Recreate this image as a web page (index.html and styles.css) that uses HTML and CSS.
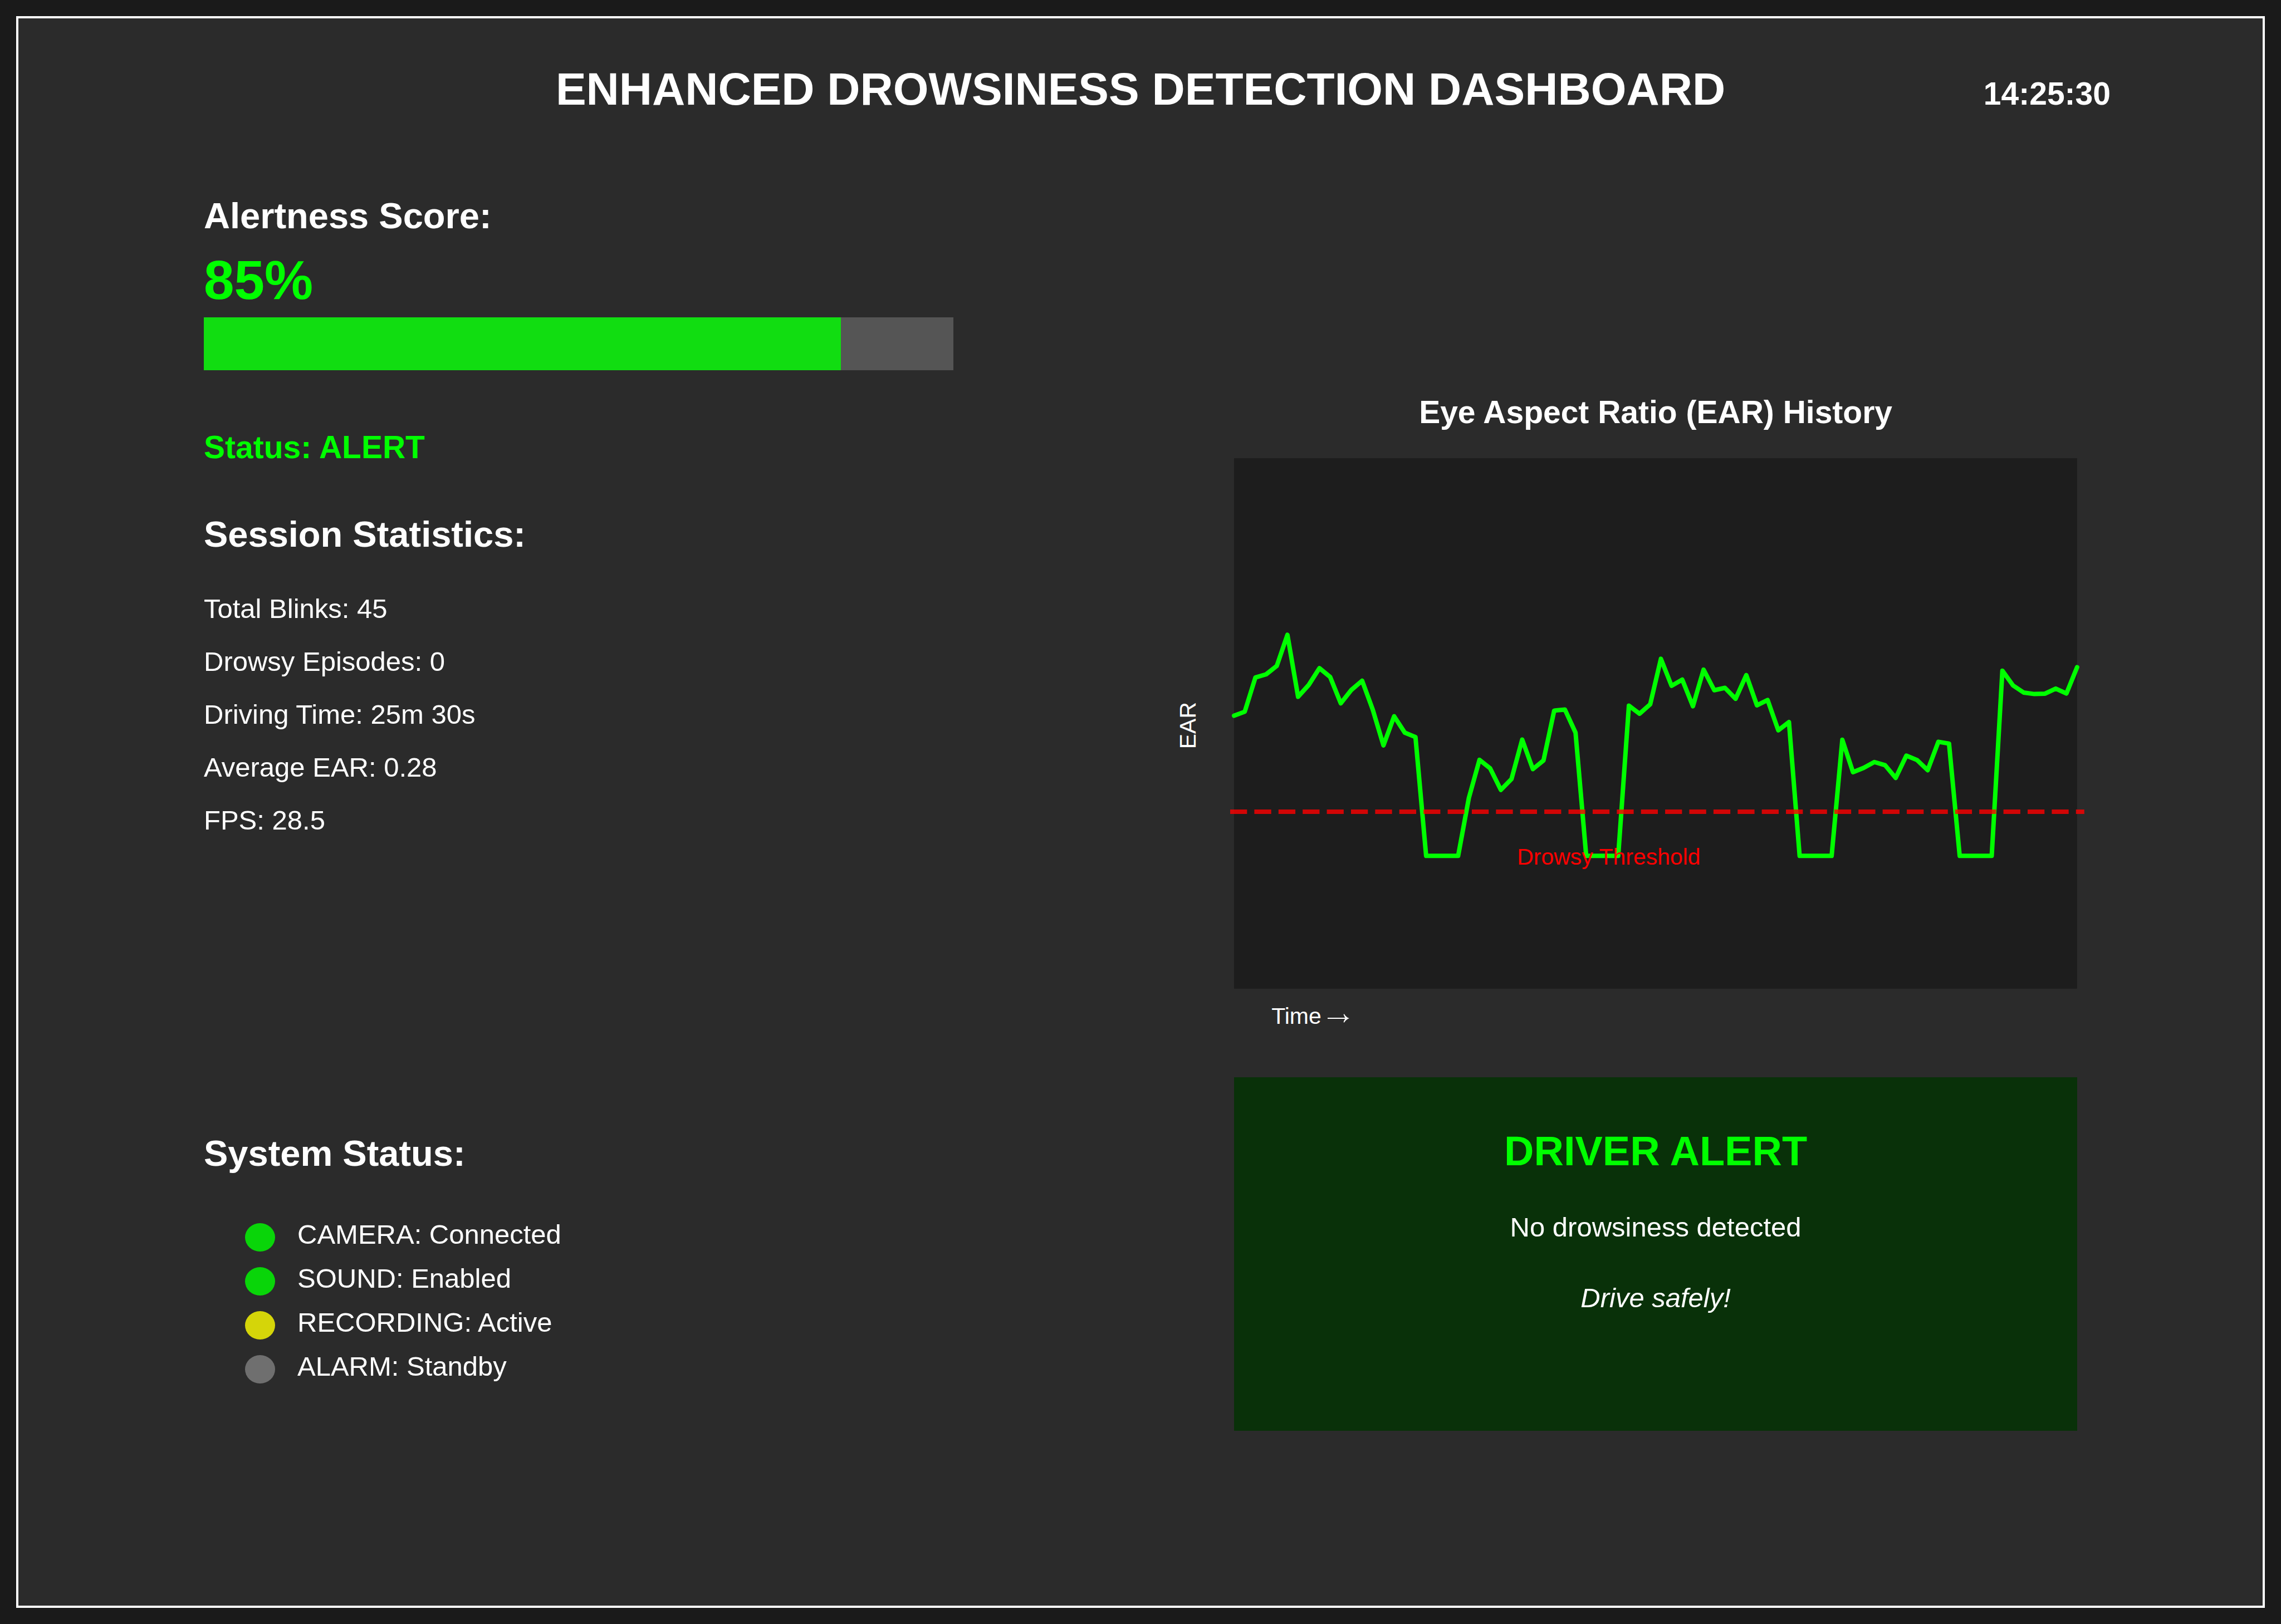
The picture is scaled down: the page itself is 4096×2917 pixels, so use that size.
FILE: index.html
```html
<!DOCTYPE html>
<html lang="en">
<head>
  <meta charset="utf-8">
  <meta name="viewport" content="width=device-width, initial-scale=1">
  <title>Enhanced Drowsiness Detection Dashboard</title>
  <link rel="stylesheet" href="styles.css">
</head>
<body>
  <div class="dashboard">
    <header class="header">
      <h1 class="title">ENHANCED DROWSINESS DETECTION DASHBOARD</h1>
      <time class="clock">14:25:30</time>
    </header>

    <main class="main">
      <div class="metrics">
        <section>
          <h2 class="heading">Alertness Score:</h2>
          <p class="score">85%</p>
          <div class="bar" role="progressbar" aria-label="Alertness score" aria-valuemin="0" aria-valuemax="100" aria-valuenow="85">
            <div class="bar-fill" style="width: 85%"></div>
          </div>
          <p class="status">Status: ALERT</p>
        </section>

        <section class="session">
          <h2 class="heading">Session Statistics:</h2>
          <ul class="stats">
            <li>Total Blinks: 45</li>
            <li>Drowsy Episodes: 0</li>
            <li>Driving Time: 25m 30s</li>
            <li>Average EAR: 0.28</li>
            <li>FPS: 28.5</li>
          </ul>
        </section>

        <section class="system">
          <h2 class="heading">System Status:</h2>
          <ul class="devices">
            <li class="device"><span class="dot dot-on"></span>CAMERA: Connected</li>
            <li class="device"><span class="dot dot-on"></span>SOUND: Enabled</li>
            <li class="device"><span class="dot dot-busy"></span>RECORDING: Active</li>
            <li class="device"><span class="dot dot-idle"></span>ALARM: Standby</li>
          </ul>
        </section>
      </div>

      <div class="monitor">
        <h2 class="chart-title">Eye Aspect Ratio (EAR) History</h2>
        <span class="axis-y">EAR</span>
        <svg class="plot" viewBox="0 0 1514 953" role="img" aria-label="EAR over time with drowsy threshold">
          <rect class="plot-area" width="1514" height="953"/>
          <g transform="translate(0 276.67) scale(19.165 .32742)">
            <polyline class="ear-line" points="0,568 1,546 2,358 3,341 4,295 5,124 6,464 7,399 8,307 9,355 10,500 11,426 12,376 13,535 14,731 15,571 16,661 17,685 18,1337 19,1337 20,1337 21,1337 22,1020 23,810 24,857 25,975 26,915 27,699 28,861 29,813 30,540 31,534 32,661 33,1337 34,1337 35,1337 36,1337 37,513 38,557 39,505 40,256 41,404 42,370 43,516 44,315 45,428 46,415 47,475 48,345 49,511 50,482 51,648 52,603 53,1337 54,1337 55,1337 56,1337 57,700 58,878 59,854 60,822 61,839 62,909 63,787 64,811 65,867 66,711 67,721 68,1337 69,1337 70,1337 71,1337 72,321 73,402 74,441 75,449 76,447 77,419 78,446 79,302"/>
          </g>
          <line class="threshold" x1="-7" y1="635" x2="1527" y2="635"/>
          <text class="threshold-label" x="673" y="730">Drowsy Threshold</text>
        </svg>
        <span class="axis-x">Time <svg class="arrow" viewBox="0 0 39 16" aria-hidden="true"><path d="M0 7H31.500Q29.500 4.500 28.500 .8L30 .4Q33 6 39 8Q33 10 30 15.600L28.500 15.200Q29.500 11.500 31.500 9H0Z"/></svg></span>
        <section class="alert">
          <h2 class="alert-title">DRIVER ALERT</h2>
          <p class="alert-text">No drowsiness detected</p>
          <p class="alert-note">Drive safely!</p>
        </section>
      </div>
    </main>
  </div>
</body>
</html>
```
FILE: styles.css
```css
* {
  box-sizing: border-box;
  margin: 0;
  padding: 0;
}

body {
  padding: 29px;
  background: #1a1a1a;
  color: #fff;
  font-family: "Liberation Sans", Arial, sans-serif;
  font-size: 49px;
  line-height: 56px;
}

ul {
  list-style: none;
}

.dashboard {
  min-height: calc(100vh - 58px);
  border: 4px solid #fff;
  background: #2b2b2b;
}

/* Header */
.header {
  display: grid;
  grid-template-columns: 1fr auto 1fr;
  align-items: baseline;
  padding: 79px 273px 0;
}

.title {
  grid-column: 2;
  font-size: 82px;
  line-height: 96px;
}

.clock {
  justify-self: end;
  font-size: 57px;
  font-weight: bold;
  line-height: 64px;
}

/* Two columns: metrics on the left, monitor on the right */
.main {
  display: grid;
  grid-template-columns: 4fr 6fr;
  padding: 142px 333px 0;
}

.heading {
  font-size: 65px;
  line-height: 76px;
}

.score {
  margin-top: 21px;
  color: #0f0;
  font-size: 98px;
  font-weight: bold;
  line-height: 112px;
}

.bar {
  height: 95px;
  margin-top: 11px;
  background: #555;
}

.bar-fill {
  height: 100%;
  background: #11dd11;
}

.status {
  margin-top: 106px;
  color: #0f0;
  font-size: 57px;
  font-weight: bold;
  line-height: 64px;
}

.session {
  margin-top: 87px;
}

.stats {
  display: flex;
  flex-direction: column;
  gap: 39px;
  margin-top: 67px;
}

.system {
  margin-top: 533px;
}

.devices {
  display: flex;
  flex-direction: column;
  gap: 23px;
  margin-top: 79px;
  padding-left: 74px;
}

.device {
  display: flex;
  align-items: center;
  gap: 40px;
  height: 56px;
}

.dot {
  width: 54px;
  height: 51px;
  margin-top: 10px;
  border-radius: 50%;
}

.dot-on {
  background: #09d509;
}

.dot-busy {
  background: #d5d509;
}

.dot-idle {
  background: #6f6f6f;
}

/* Chart */
.monitor {
  display: grid;
  grid-template-columns: 3fr 9fr;
  align-content: start;
  padding-top: 358px;
}

.chart-title {
  grid-column: 2;
  font-size: 57px;
  line-height: 64px;
  text-align: center;
}

.axis-y {
  align-self: center;
  justify-self: end;
  margin-top: 59px;
  margin-right: 59px;
  font-size: 41px;
  line-height: 48px;
  writing-mode: vertical-rl;
  transform: rotate(180deg);
}

.plot {
  display: block;
  width: 100%;
  margin-top: 51px;
  overflow: visible;
}

.plot-area {
  fill: #1d1d1d;
}

.ear-line {
  fill: none;
  stroke: #0f0;
  stroke-width: 8px;
  stroke-linecap: round;
  stroke-linejoin: round;
  vector-effect: non-scaling-stroke;
}

.threshold {
  stroke: #f00;
  stroke-width: 8px;
  stroke-dasharray: 30.3 13.1;
  opacity: 0.8;
}

.threshold-label {
  fill: #f00;
  font-size: 41px;
  text-anchor: middle;
}

.axis-x {
  grid-column: 2;
  margin-top: 25px;
  padding-left: 67px;
  font-size: 41px;
  line-height: 48px;
}

.arrow {
  width: 39px;
  height: 16px;
  fill: currentColor;
  vertical-align: 2px;
}

/* Driver alert panel */
.alert {
  grid-column: 2;
  margin-top: 86px;
  padding: 91px 0 211px;
  background: #093109;
  text-align: center;
}

.alert-title {
  color: #0f0;
  font-size: 74px;
  line-height: 84px;
}

.alert-text {
  margin-top: 66px;
}

.alert-note {
  margin-top: 71px;
  font-style: italic;
}
```
